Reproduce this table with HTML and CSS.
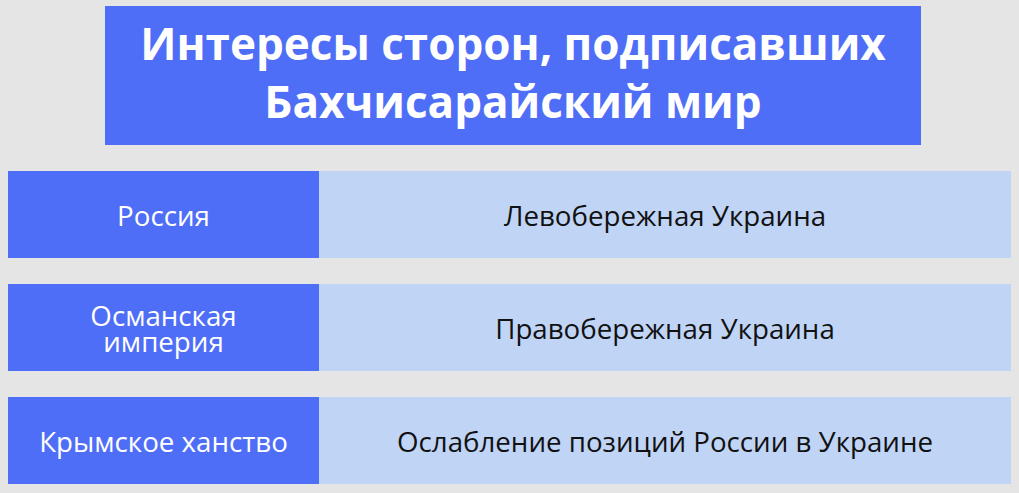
FILE: index.html
```html
<!DOCTYPE html>
<html lang="ru">
<head>
<meta charset="utf-8">
<link rel="stylesheet" href="styles.css">
</head>
<body>
<div class="page">
  <div class="title">Интересы сторон, подписавших<br>Бахчисарайский мир</div>
  <div class="rows">
    <div class="row">
      <div class="side">Россия</div>
      <div class="interest">Левобережная Украина</div>
    </div>
    <div class="row">
      <div class="side">Османская<br>империя</div>
      <div class="interest">Правобережная Украина</div>
    </div>
    <div class="row">
      <div class="side">Крымское ханство</div>
      <div class="interest">Ослабление позиций России в Украине</div>
    </div>
  </div>
</div>
</body>
</html>
```
FILE: styles.css
```css
html, body {
  margin: 0;
  padding: 0;
  background: #e5e5e5;
}
body {
  width: 1019px;
  height: 493px;
  overflow: hidden;
  font-family: "Open Sans", "Liberation Sans", sans-serif;
}
.page {
  padding: 6px 8px 0 8px;
}
.title {
  margin-left: 97px;
  width: 816px;
  height: 139px;
  box-sizing: border-box;
  background: #4f6ef7;
  color: #ffffff;
  font-weight: 700;
  font-size: 44px;
  line-height: 58px;
  text-align: center;
  padding-top: 8px;
}
.rows {
  margin-top: 26px;
  display: flex;
  flex-direction: column;
  gap: 26px;
}
.row {
  display: flex;
  height: 87px;
}
.side {
  width: 311px;
  background: #4f6ef7;
  color: #ffffff;
  display: flex;
  align-items: center;
  justify-content: center;
  text-align: center;
  font-size: 27.7px;
  line-height: 26px;
}
.interest {
  flex: 1;
  background: #c0d4f6;
  color: #111111;
  display: flex;
  align-items: center;
  justify-content: center;
  font-size: 27.7px;
}
```
